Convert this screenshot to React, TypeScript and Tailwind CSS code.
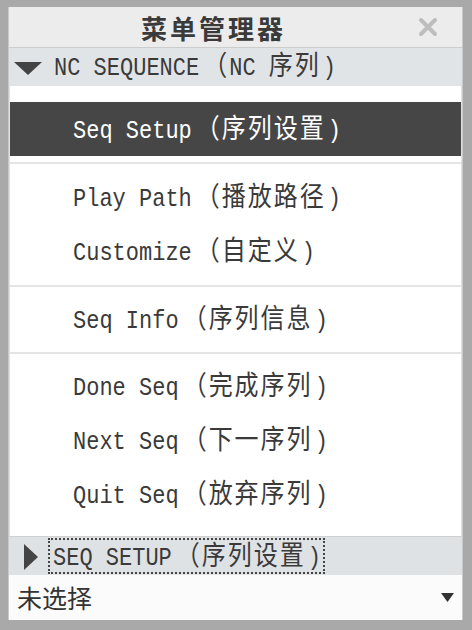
const mono = "font-['Liberation_Mono','Noto_Sans_CJK_SC',monospace]"

function Zh({ children }: { children: React.ReactNode }) {
  return <span className="text-[24px] tracking-[2px]">{children}</span>
}

function Label({ en, zh }: { en: string; zh: string }) {
  return (
    <span className="inline-flex items-baseline whitespace-pre scale-y-[1.13] origin-center">
      <span>{en}</span>
      <span className="ml-[4px]">
        <Zh>（{zh}</Zh>
      </span>
      <span className="ml-[2px]">)</span>
    </span>
  )
}

function Item({ en, zh, active }: { en: string; zh: string; active?: boolean }) {
  return (
    <div
      className={`h-[54px] flex items-center pl-[63px] pt-[4px] text-[22px] ${
        active ? 'bg-[#464646] text-white' : 'text-[#3a3a3a]'
      }`}
    >
      <Label en={en} zh={zh} />
    </div>
  )
}

function Sep() {
  return <div className="h-[2px] bg-[#e4e4e4]" />
}

export default function App() {
  return (
    <div className={`w-[472px] h-[630px] bg-[#a9a9a9] pt-[7px] pl-[8px] pr-[9px] pb-[10px] ${mono}`}>
      <div className="h-full flex flex-col bg-[#dfe1e2] border-l border-r border-[#c9c9c9]">
        {/* title bar */}
        <div className="h-[41px] flex items-center bg-[#ececec] border-b border-[#cdcdcd] shrink-0">
          <div className="flex-1 text-center pl-[16px] font-['Noto_Sans_CJK_SC',sans-serif] font-bold text-[26px] tracking-[3px] text-[#3a3a3a]">
            菜单管理器
          </div>
          <div className="w-[60px] flex justify-center pr-[8px]">
            <svg width="20" height="20" viewBox="0 0 20 20">
              <path d="M3 3 L17 17 M17 3 L3 17" stroke="#bdbdbd" strokeWidth="4" strokeLinecap="round" />
            </svg>
          </div>
        </div>

        {/* NC SEQUENCE header */}
        <div className="h-[38px] flex items-center bg-[#e1e4e6] shrink-0 pt-[2px] text-[22px] text-[#3a3a3a]">
          <svg width="28" height="13" viewBox="0 0 28 13" className="ml-[5px] mr-[12px]">
            <polygon points="0,0 28,0 14,13" fill="#444" />
          </svg>
          <span className="inline-flex items-baseline whitespace-pre scale-y-[1.15]">
            <span>NC SEQUENCE</span>
            <span className="ml-[4px] text-[24px] tracking-[2px]">（</span>
            <span>NC </span>
            <Zh>序列</Zh>
            <span className="ml-[2px]">)</span>
          </span>
        </div>

        {/* menu list */}
        <div className="mx-[1px] h-[450px] bg-white shrink-0 flex flex-col">
          <div className="pt-[16px] pb-[6px]">
            <Item en="Seq Setup" zh="序列设置" active />
          </div>
          <Sep />
          <div className="pt-[6px] pb-[7px]">
            <Item en="Play Path" zh="播放路径" />
            <Item en="Customize" zh="自定义" />
          </div>
          <Sep />
          <div className="pt-[5px] pb-[6px]">
            <Item en="Seq Info" zh="序列信息" />
          </div>
          <Sep />
          <div className="pt-[5px]">
            <Item en="Done Seq" zh="完成序列" />
            <Item en="Next Seq" zh="下一序列" />
            <Item en="Quit Seq" zh="放弃序列" />
          </div>
        </div>

        {/* SEQ SETUP header */}
        <div className="h-[39px] flex items-center bg-[#dfe2e4] border-t border-[#d0d0d0] shrink-0 text-[22px] text-[#3a3a3a]">
          <svg width="14" height="26" viewBox="0 0 14 26" className="ml-[15px] mr-[10px] mt-[2px]">
            <polygon points="0,0 14,13 0,26" fill="#444" />
          </svg>
          <div className="h-[36px] flex items-center pl-[3px] pr-[2px] pt-[3px] border-2 border-dotted border-[#444]">
            <Label en="SEQ SETUP" zh="序列设置" />
          </div>
        </div>

        {/* dropdown */}
        <div className="flex-1 flex items-center justify-between bg-[#fbfbfb] pl-[8px] pr-[8px]">
          <span className="font-['Noto_Sans_CJK_SC',sans-serif] text-[25px] text-[#333]">未选择</span>
          <svg width="13" height="9" viewBox="0 0 13 9">
            <polygon points="0,0 13,0 6.5,9" fill="#333" />
          </svg>
        </div>
      </div>
    </div>
  )
}
